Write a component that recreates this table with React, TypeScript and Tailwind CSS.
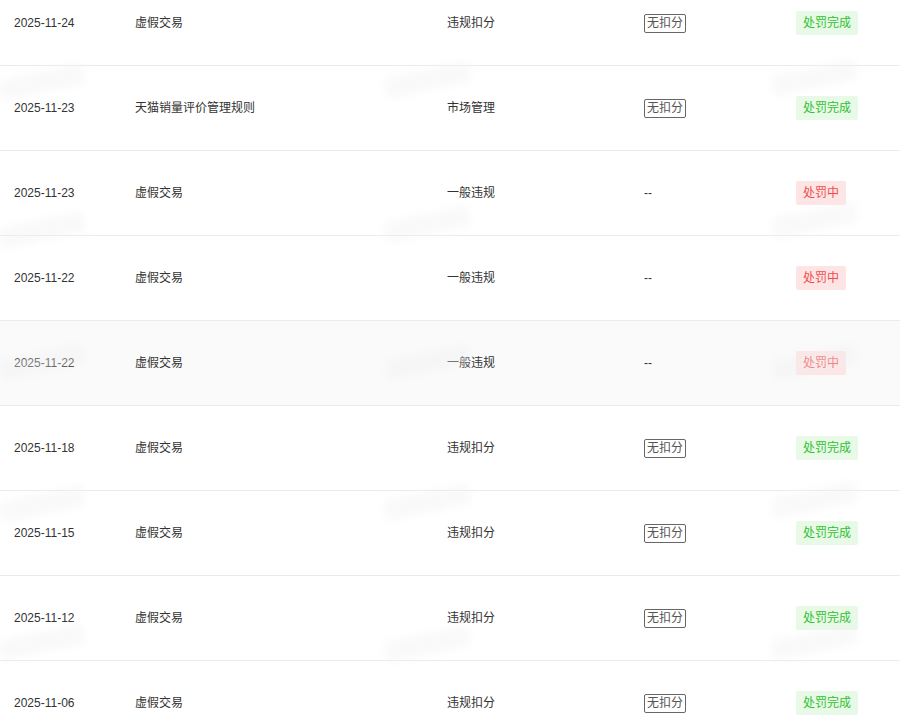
type Row = {
  date: string;
  reason: string;
  type: string;
  score: boolean;
  done: boolean;
};

const rows: Row[] = [
  { date: '2025-11-24', reason: '虚假交易', type: '违规扣分', score: true, done: true },
  { date: '2025-11-23', reason: '天猫销量评价管理规则', type: '市场管理', score: true, done: true },
  { date: '2025-11-23', reason: '虚假交易', type: '一般违规', score: false, done: false },
  { date: '2025-11-22', reason: '虚假交易', type: '一般违规', score: false, done: false },
  { date: '2025-11-22', reason: '虚假交易', type: '一般违规', score: false, done: false },
  { date: '2025-11-18', reason: '虚假交易', type: '违规扣分', score: true, done: true },
  { date: '2025-11-15', reason: '虚假交易', type: '违规扣分', score: true, done: true },
  { date: '2025-11-12', reason: '虚假交易', type: '违规扣分', score: true, done: true },
  { date: '2025-11-06', reason: '虚假交易', type: '违规扣分', score: true, done: true },
];

// blurred watermark pieces (left / top in px)
const marks = [
  { l: 0, t: 72 }, { l: 385, t: 70 }, { l: 772, t: 68 },
  { l: 0, t: 220 }, { l: 385, t: 214 }, { l: 772, t: 210 },
  { l: 0, t: 352 }, { l: 385, t: 352 }, { l: 772, t: 352 },
  { l: 0, t: 494 }, { l: 385, t: 492 }, { l: 772, t: 490 },
  { l: 0, t: 632 }, { l: 385, t: 634 }, { l: 772, t: 632 },
];

export default function App() {
  return (
    <div
      className="relative h-[728px] w-[900px] overflow-hidden bg-white text-[12px] text-[#333]"
      style={{ fontFamily: '"Liberation Sans", "Noto Sans CJK SC", sans-serif' }}
    >
      <div className="-mt-[19px]">
        {rows.map((r, i) => (
          <div
            key={i}
            className={`grid h-[85px] grid-cols-[135px_312px_197px_152px_1fr] items-center border-b border-[#ebebeb] ${i === 4 ? 'bg-[#fafafa]' : ''}`}
          >
            <div className="pl-[14px]">{r.date}</div>
            <div>{r.reason}</div>
            <div>{r.type}</div>
            <div>
              {r.score ? (
                <span className="inline-block rounded-[2px] border border-[#666] px-[2px] leading-[17px] text-[#555]">
                  无扣分
                </span>
              ) : (
                <span>--</span>
              )}
            </div>
            <div>
              {r.done ? (
                <span className="inline-block rounded-[2px] bg-[#e8f9e8] px-[7px] leading-[24px] text-[#2fc12f]">
                  处罚完成
                </span>
              ) : (
                <span className="inline-block rounded-[2px] bg-[#fde5e5] px-[7px] leading-[24px] text-[#f04b4b]">
                  处罚中
                </span>
              )}
            </div>
          </div>
        ))}
      </div>

      {marks.map((m, i) => (
        <div
          key={i}
          className="pointer-events-none absolute h-[20px] w-[85px] -rotate-[12deg] bg-[#f0f0f0] opacity-40 blur-[4px]"
          style={{ left: m.l, top: m.t }}
        />
      ))}
    </div>
  );
}
